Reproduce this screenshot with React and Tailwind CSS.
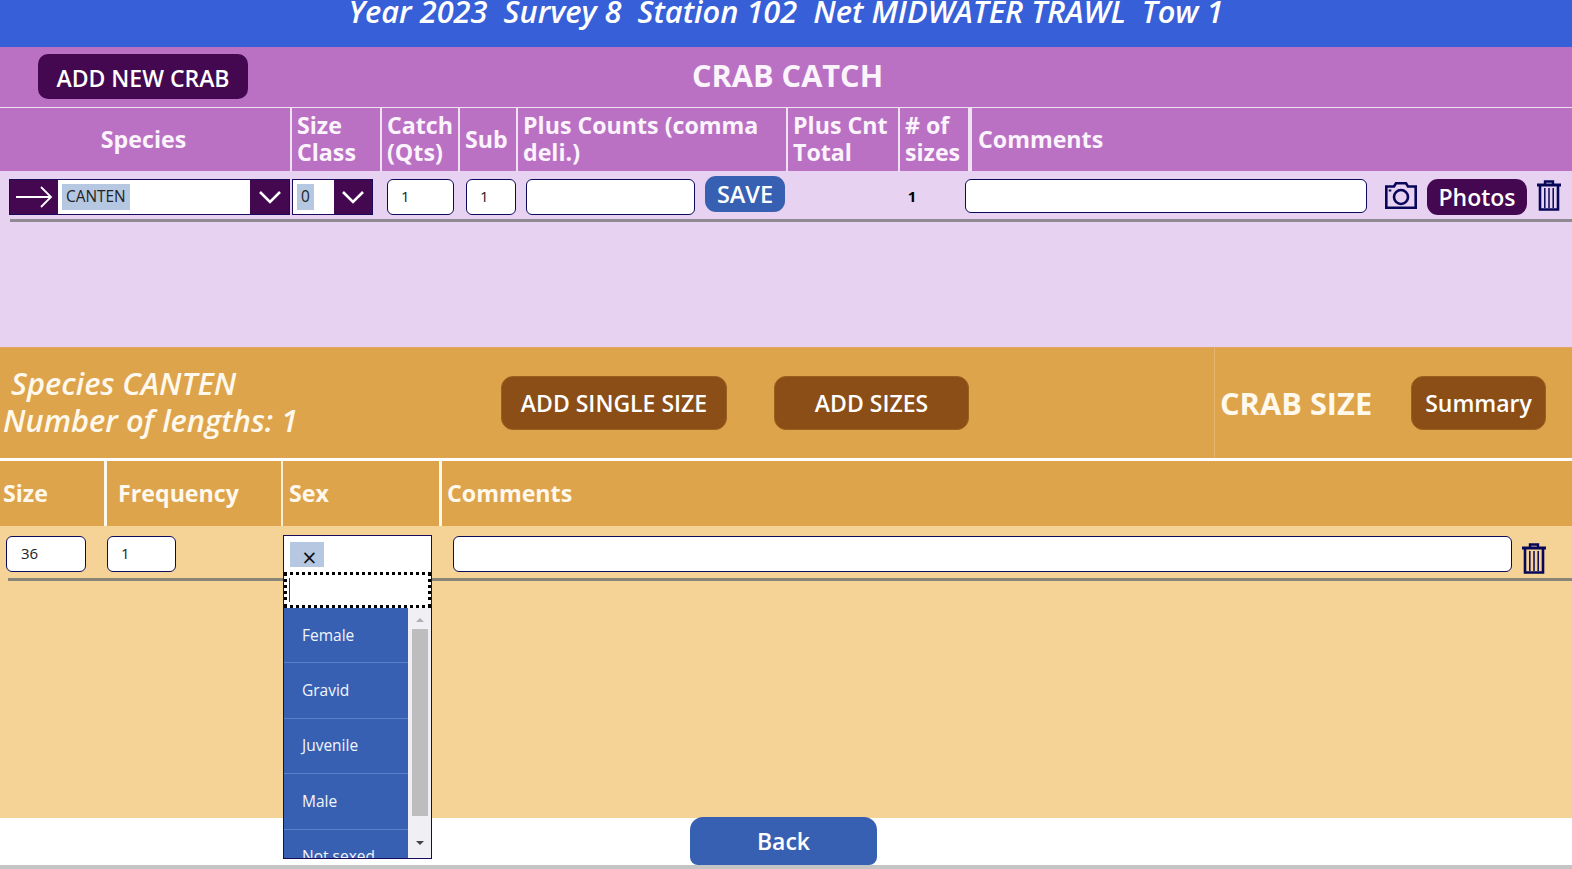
import React from 'react';

const font = { fontFamily: '"Open Sans", "Liberation Sans", sans-serif' };

const Chevron = () => (
  <svg width="24" height="14" viewBox="0 0 24 14" fill="none" stroke="white" strokeWidth="2.6">
    <path d="M2 2 L12 12 L22 2" />
  </svg>
);

const Trash = () => (
  <svg width="24" height="31" viewBox="0 0 24 31" fill="none" stroke="#07075a">
    <path d="M0 5 H24" strokeWidth="3" />
    <path d="M8 4 V1.5 H16 V4" strokeWidth="2.4" />
    <path d="M3 6 V29.5 H21 V6" strokeWidth="2.6" />
    <path d="M7.8 8 V28 M12 8 V28 M16.2 8 V28" strokeWidth="1.5" />
  </svg>
);

const Camera = () => (
  <svg width="32" height="27" viewBox="0 0 32 27" fill="none" stroke="#07075a" strokeWidth="2.6">
    <path d="M1.3 4.5 H9 L11 1.3 H21 L23 4.5 H30.7 V25.7 H1.3 Z" />
    <circle cx="16" cy="15" r="7" />
    <path d="M5 7.5 V9.5" />
  </svg>
);

const Arrow = () => (
  <svg width="38" height="22" viewBox="0 0 38 22" fill="none" stroke="white" strokeWidth="1.8">
    <path d="M1 11 H36 M26 1 L36 11 L26 21" />
  </svg>
);

const Head = ({ className, children }) => (
  <div className={`flex shrink-0 items-center border-r-2 border-[#f0e2f3] px-[5px] text-[23.2px] leading-[27px] font-bold text-[#fbf4fc] ${className}`}>
    {children}
  </div>
);

const OrangeHead = ({ className, children }) => (
  <div className={`flex shrink-0 items-center text-[23.2px] font-bold text-[#fff8ec] ${className}`}>{children}</div>
);

const Input = ({ className, children }) => (
  <div className={`flex shrink-0 items-center rounded-[6px] border border-[#0b0a5b] bg-white pb-[2px] text-[15px] text-[#222] ${className}`}>
    {children}
  </div>
);

const sexes = ['Female', 'Gravid', 'Juvenile', 'Male', 'Not sexed'];

export default function App() {
  return (
    <div className="relative h-[869px] w-[1572px] overflow-hidden bg-white" style={font}>
      {/* Title */}
      <div className="flex h-[47px] justify-center overflow-hidden bg-[#375fd8]">
        <div className="-mt-[10px] text-[30.8px] leading-[42px] font-semibold whitespace-pre text-white italic">
          Year 2023  Survey 8  Station 102  Net MIDWATER TRAWL  Tow 1
        </div>
      </div>

      {/* Crab catch */}
      <div className="relative flex h-[60px] items-center bg-[#ba71c4] pl-[38px]">
        <button className="-mt-[2px] h-[45px] w-[210px] rounded-[10px] bg-[#43084f] pt-[5px] text-[23px] font-semibold text-white">ADD NEW CRAB</button>
        <div className="ml-[444px] w-[190px] -translate-y-[2px] text-center text-[30.7px] font-bold whitespace-nowrap text-[#fbf4fc]">CRAB CATCH</div>
      </div>
      <div className="h-px bg-[#f0e2f3]" />
      <div className="flex h-[63px] bg-[#ba71c4]">
        <Head className="w-[292px] justify-center pr-[8px]">Species</Head>
        <Head className="w-[90px] pb-[2px]">Size<br />Class</Head>
        <Head className="w-[78px] pb-[2px]">Catch<br />(Qts)</Head>
        <Head className="w-[58px]">Sub</Head>
        <Head className="w-[270px] pb-[2px]">Plus Counts (comma deli.)</Head>
        <Head className="w-[112px] pb-[2px]">Plus Cnt Total</Head>
        <div className="flex w-[72px] shrink-0 items-center border-r-[4px] border-[#f0e2f3] px-[5px] pb-[2px] text-[23.2px] leading-[27px] font-bold text-[#fbf4fc]"># of<br />sizes</div>
        <div className="flex items-center pl-[6px] text-[23.2px] font-bold text-[#fbf4fc]">Comments</div>
      </div>

      <div className="h-[176px] bg-[#e8d2f2] pl-[9px]">
        <div className="flex h-[48px] items-start pt-[8px]">
          <div className="flex h-[36px] w-[281px] shrink-0 border border-[#1a0a5b] bg-white">
            <div className="flex w-[48px] items-center justify-center bg-[#43084f]"><Arrow /></div>
            <div className="flex flex-1 items-center pl-[4px]">
              <span className="bg-[#b5c7e1] px-[4px] py-[2px] text-[15.4px] leading-[22px] text-[#222]">CANTEN</span>
            </div>
            <div className="flex w-[39px] items-center justify-center bg-[#43084f]"><Chevron /></div>
          </div>
          <div className="ml-[2px] flex h-[36px] w-[81px] shrink-0 border border-[#1a0a5b] bg-white">
            <div className="flex flex-1 items-center pl-[4px]">
              <span className="bg-[#b5c7e1] px-[4px] py-[2px] text-[15.4px] leading-[22px] text-[#222]">0</span>
            </div>
            <div className="flex w-[38px] items-center justify-center bg-[#43084f]"><Chevron /></div>
          </div>
          <Input className="ml-[14px] h-[36px] w-[67px] pl-[13px]">1</Input>
          <Input className="ml-[12px] h-[36px] w-[50px] pl-[13px]">1</Input>
          <Input className="ml-[10px] h-[36px] w-[169px]" />
          <button className="-mt-[3px] ml-[10px] h-[36px] w-[80px] shrink-0 rounded-[11px] bg-[#3860b2] text-[23.5px] font-semibold text-white">
            <span className="relative top-[1px]">SAVE</span>
          </button>
          <div className="ml-[122px] w-[10px] shrink-0 pt-[6px] text-center text-[15px] leading-[22px] font-bold text-black">1</div>
          <Input className="ml-[48px] h-[34px] w-[402px]" />
          <div className="ml-[18px] shrink-0 pt-[3px]"><Camera /></div>
          <button className="ml-[10px] h-[36px] w-[100px] shrink-0 rounded-[11px] bg-[#43084f] text-[23px] font-semibold text-white">Photos</button>
          <div className="ml-[10px] shrink-0 pt-[1px]"><Trash /></div>
        </div>
        <div className="ml-px h-[3px] bg-[#8f8a94]" />
      </div>

      {/* Crab size */}
      <div className="flex h-[111px] border-t border-[#e2a566] bg-[#dda44b]">
        <div className="w-[501px] shrink-0 pt-[17px] text-[30.8px] leading-[37px] font-semibold text-[#fff8ec] italic">
          <div className="pl-[11px]">Species CANTEN</div>
          <div className="pl-[3px]">Number of lengths: 1</div>
        </div>
        <button className="mt-[28px] h-[54px] w-[226px] shrink-0 rounded-[12px] border border-[#99601e] bg-[#8b4e17] text-[23px] font-semibold text-white">ADD SINGLE SIZE</button>
        <button className="mt-[28px] ml-[47px] h-[54px] w-[195px] shrink-0 rounded-[12px] border border-[#99601e] bg-[#8b4e17] text-[23px] font-semibold text-white">ADD SIZES</button>
        <div className="ml-[245px] flex w-[358px] shrink-0 items-start border-l border-[#e6b46a]">
          <div className="w-[196px] pt-[33px] pl-[5px] text-[30.8px] leading-[44px] font-bold whitespace-nowrap text-[#fff8ec]">CRAB SIZE</div>
          <button className="mt-[28px] h-[54px] w-[135px] rounded-[12px] border border-[#99601e] bg-[#8b4e17] text-[23px] font-semibold text-white">Summary</button>
        </div>
      </div>
      <div className="h-[3px] bg-white" />
      <div className="flex h-[65px] bg-[#dda44b]">
        <OrangeHead className="w-[107px] border-r-[3px] border-[#fff8ec] pl-[3px]">Size</OrangeHead>
        <OrangeHead className="w-[176px] border-r-2 border-[#fbeed6] pl-[11px]">Frequency</OrangeHead>
        <OrangeHead className="w-[159px] border-r-[3px] border-[#fff8ec] pl-[6px]">Sex</OrangeHead>
        <OrangeHead className="pl-[5px]">Comments</OrangeHead>
      </div>

      <div className="h-[292px] bg-[#f5d295] pl-[6px]">
        <div className="flex h-[52px] items-start pt-[10px]">
          <Input className="h-[36px] w-[80px] pl-[14px]">36</Input>
          <Input className="ml-[21px] h-[36px] w-[69px] pl-[13px]">1</Input>
          <div className="w-[277px] shrink-0" />
          <Input className="h-[36px] w-[1059px]" />
          <div className="ml-[10px] shrink-0 pt-[7px]"><Trash /></div>
        </div>
        <div className="ml-[2px] h-[3px] bg-[#8a8579]" />
      </div>

      {/* Footer */}
      <div className="flex h-[47px] justify-center bg-white pr-[5px]">
        <button className="-mt-px h-[48px] w-[187px] rounded-t-[13px] rounded-b-[8px] bg-[#3860b2] text-[23px] font-semibold text-white">Back</button>
      </div>
      <div className="h-[4px] bg-[#c4c4c4]" />

      {/* Open Sex dropdown, over the rows */}
      <div className="absolute top-[535px] left-[283px] flex h-[324px] w-[149px] flex-col overflow-hidden border border-[#1a0a5b] bg-white">
        <div className="h-[36px] shrink-0 pt-[6px] pl-[6px]">
          <div className="flex h-[25px] w-[34px] items-end justify-center bg-[#b5c7e1] pl-[5px] text-[25px] leading-[19px] text-[#111]">×</div>
        </div>
        <div className="flex h-[36px] shrink-0 items-center border-[3px] border-dotted border-black pl-[2px]">
          <div className="h-[24px] w-px bg-[#333]" />
        </div>
        <div className="flex min-h-0 flex-1">
          <div className="flex-1 overflow-hidden bg-[#3860b2]">
            {sexes.map((s) => (
              <div key={s} className="flex h-[55.4px] items-center border-b border-[#5a80c8] pl-[18px] text-[15.5px] text-[#f2f5fb]">{s}</div>
            ))}
          </div>
          <div className="relative flex w-[23px] shrink-0 flex-col items-center bg-[#f0f0f4]">
            <div className="mt-[10px] h-0 w-0 border-x-[4px] border-b-[4px] border-x-transparent border-b-[#b0b0b0]" />
            <div className="mt-[7px] h-[187px] w-[16px] bg-[#bdbdbd]" />
            <div className="mt-[25px] h-0 w-0 border-x-[4px] border-t-[4px] border-x-transparent border-t-[#444]" />
          </div>
        </div>
      </div>
    </div>
  );
}
